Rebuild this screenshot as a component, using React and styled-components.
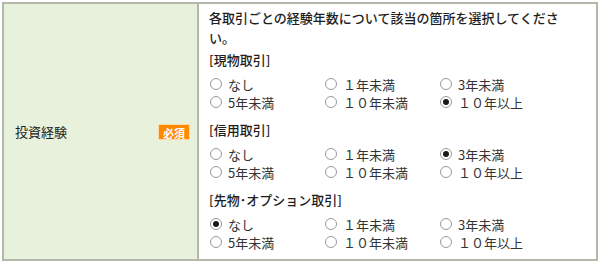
import styled, { createGlobalStyle } from "styled-components";

const GlobalStyle = createGlobalStyle`
  body {
    margin: 0;
    background: #ffffff;
    font-family: "Noto Sans CJK JP", "Liberation Sans", sans-serif;
  }
`;

const Table = styled.div`
  display: flex;
  margin: 2px 2px 0 2px;
  height: 259px;
  box-sizing: border-box;
  border: 2px solid #b3b8ab;
`;

const HeadCell = styled.div`
  width: 195px;
  flex-shrink: 0;
  background: #e8f1dc;
  border-right: 2px solid #b3b8ab;
  display: flex;
  align-items: center;
  justify-content: space-between;
  padding: 0 7px 0 11px;
  box-sizing: border-box;
`;

const Label = styled.span`
  font-size: 13px;
  color: #222;
`;

const Badge = styled.span`
  background: #ff8a00;
  color: #fff;
  font-size: 11px;
  font-weight: bold;
  width: 32px;
  height: 16px;
  line-height: 16px;
  text-align: center;
  border: 1px solid #ffd9a8;
  box-sizing: border-box;
`;

const BodyCell = styled.div`
  flex: 1;
  padding: 4px 0 0 10px;
`;

const Lead = styled.p`
  margin: 0 0 3px;
  width: 356px;
  font-size: 13px;
  line-height: 20px;
  color: #1e1e1e;
  font-weight: 500;
`;

const Section = styled.div`
  margin-bottom: 10px;
`;

const SectionTitle = styled.div`
  font-size: 13px;
  line-height: 18px;
  font-weight: 500;
  color: #1e1e1e;
  margin-bottom: 6px;
`;

const Options = styled.div`
  display: grid;
  grid-template-columns: repeat(3, 115px);
  grid-auto-rows: 18px;
`;

const Option = styled.label`
  display: flex;
  align-items: center;
  gap: 6px;
  font-size: 13px;
  color: #333;
  padding-left: 1px;
`;

const Radio = styled.input.attrs({ type: "radio" })`
  appearance: none;
  margin: 0;
  width: 12px;
  height: 12px;
  border-radius: 50%;
  border: 1px solid #9a9a9a;
  background: #fff;
  display: grid;
  place-content: center;
  &:checked::before {
    content: "";
    width: 6px;
    height: 6px;
    border-radius: 50%;
    background: #1a1a1a;
  }
`;

const choices = ["なし", "１年未満", "3年未満", "5年未満", "１０年未満", "１０年以上"];

const sections = [
  { key: "spot", title: "[現物取引]", value: "１０年以上" },
  { key: "credit", title: "[信用取引]", value: "3年未満" },
  { key: "futures", title: "[先物･オプション取引]", value: "なし" },
];

const App = () => {
  return (
    <>
      <GlobalStyle />
      <Table>
        <HeadCell>
          <Label>投資経験</Label>
          <Badge>必須</Badge>
        </HeadCell>
        <BodyCell>
          <Lead>各取引ごとの経験年数について該当の箇所を選択してください。</Lead>
          {sections.map((s) => (
            <Section key={s.key}>
              <SectionTitle>{s.title}</SectionTitle>
              <Options>
                {choices.map((c) => (
                  <Option key={c}>
                    <Radio name={s.key} defaultChecked={c === s.value} />
                    {c}
                  </Option>
                ))}
              </Options>
            </Section>
          ))}
        </BodyCell>
      </Table>
    </>
  );
};

export default App;
